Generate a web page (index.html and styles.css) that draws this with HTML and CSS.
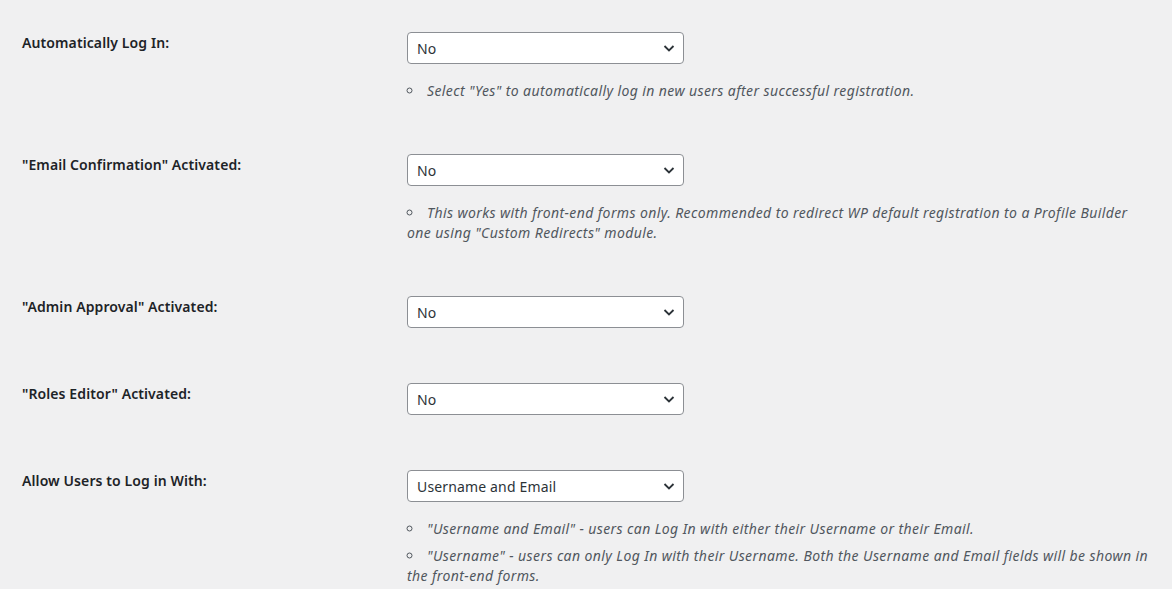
FILE: index.html
```html
<!DOCTYPE html>
<html lang="en">
<head>
<meta charset="utf-8">
<title>Settings</title>
<link rel="stylesheet" href="styles.css">
</head>
<body>
<div class="settings">
  <div class="row">
    <div class="label">Automatically Log In:</div>
    <div class="field">
      <span class="select-wrap">
        <select class="select"><option>No</option><option>Yes</option></select>
        <svg class="chev" viewBox="0 0 16 16" width="16" height="16"><path d="M3.5 6 L8 10.5 L12.5 6" fill="none" stroke="#2c3338" stroke-width="1.8"/></svg>
      </span>
      <ul class="desc">
        <li>Select "Yes" to automatically log in new users after successful registration.</li>
      </ul>
    </div>
  </div>
  <div class="row">
    <div class="label">"Email Confirmation" Activated:</div>
    <div class="field">
      <span class="select-wrap">
        <select class="select"><option>No</option><option>Yes</option></select>
        <svg class="chev" viewBox="0 0 16 16" width="16" height="16"><path d="M3.5 6 L8 10.5 L12.5 6" fill="none" stroke="#2c3338" stroke-width="1.8"/></svg>
      </span>
      <ul class="desc">
        <li>This works with front-end forms only. Recommended to redirect WP default registration to a Profile Builder one using "Custom Redirects" module.</li>
      </ul>
    </div>
  </div>
  <div class="row">
    <div class="label">"Admin Approval" Activated:</div>
    <div class="field">
      <span class="select-wrap">
        <select class="select"><option>No</option><option>Yes</option></select>
        <svg class="chev" viewBox="0 0 16 16" width="16" height="16"><path d="M3.5 6 L8 10.5 L12.5 6" fill="none" stroke="#2c3338" stroke-width="1.8"/></svg>
      </span>
    </div>
  </div>
  <div class="row">
    <div class="label">"Roles Editor" Activated:</div>
    <div class="field">
      <span class="select-wrap">
        <select class="select"><option>No</option><option>Yes</option></select>
        <svg class="chev" viewBox="0 0 16 16" width="16" height="16"><path d="M3.5 6 L8 10.5 L12.5 6" fill="none" stroke="#2c3338" stroke-width="1.8"/></svg>
      </span>
    </div>
  </div>
  <div class="row">
    <div class="label">Allow Users to Log in With:</div>
    <div class="field">
      <span class="select-wrap">
        <select class="select"><option>Username and Email</option><option>Username</option><option>Email</option></select>
        <svg class="chev" viewBox="0 0 16 16" width="16" height="16"><path d="M3.5 6 L8 10.5 L12.5 6" fill="none" stroke="#2c3338" stroke-width="1.8"/></svg>
      </span>
      <ul class="desc">
        <li>"Username and Email" - users can Log In with either their Username or their Email.</li>
        <li>"Username" - users can only Log In with their Username. Both the Username and Email fields will be shown in the front-end forms.</li>
      </ul>
    </div>
  </div>
</div>
</body>
</html>
```

FILE: styles.css
```css
html, body {
  margin: 0;
  padding: 0;
  background: #f0f0f1;
}
body {
  font-family: "Noto Sans", "Open Sans", sans-serif;
  font-size: 14px;
  color: #1d2327;
}
.settings {
  padding: 32px 20px 0 22px;
}
.row {
  display: flex;
  align-items: flex-start;
  margin-bottom: 55px;
}
.label {
  width: 385px;
  flex: none;
  font-weight: 600;
  line-height: 18px;
  padding-top: 2px;
  color: #1d2327;
  letter-spacing: 0.1px;
}
.field {
  flex: 1;
  min-width: 0;
}
.select-wrap {
  position: relative;
  display: inline-block;
  width: 277px;
  height: 32px;
  vertical-align: top;
}
.select {
  -webkit-appearance: none;
  appearance: none;
  box-sizing: border-box;
  width: 277px;
  height: 32px;
  margin: 0;
  padding: 2px 24px 0 9px;
  border: 1px solid #8c8f94;
  border-radius: 4px;
  background: #fff;
  color: #2c3338;
  font-family: inherit;
  font-size: 14px;
  line-height: 2;
  letter-spacing: 0.15px;
}
.chev {
  position: absolute;
  right: 7px;
  top: 8px;
  pointer-events: none;
}
.desc {
  margin: 17px 0 -9px 0;
  padding: 0;
  list-style: circle inside;
  font-style: italic;
  color: #50575e;
  line-height: 20px;
  letter-spacing: 0.4px;
}
.desc li {
  margin-bottom: 7px;
}
.desc li::marker {
  color: #50575e;
  font-style: normal;
}
```
